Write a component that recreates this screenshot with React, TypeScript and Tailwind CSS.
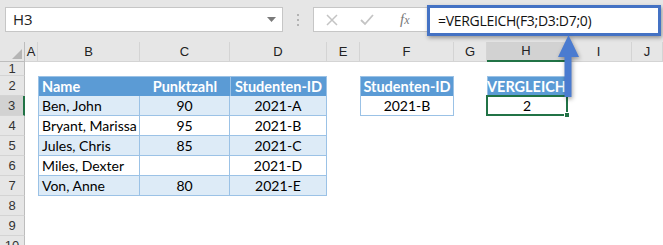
import React from 'react';

const cols = ['A', 'B', 'C', 'D', 'E', 'F', 'G', 'H', 'I', 'J'];

const rows = [
  { name: 'Ben, John', score: '90', id: '2021-A' },
  { name: 'Bryant, Marissa', score: '95', id: '2021-B' },
  { name: 'Jules, Chris', score: '85', id: '2021-C' },
  { name: 'Miles, Dexter', score: '', id: '2021-D' },
  { name: 'Von, Anne', score: '80', id: '2021-E' },
];

const cellFont = { fontFamily: 'Lato, "Liberation Sans", sans-serif' };

function Toolbar() {
  return (
    <div className="relative flex h-[42px] items-start bg-[#e6e6e6] pt-[7px]">
      <div className="ml-[5px] flex h-[25px] w-[278px] items-center justify-between border border-[#c6c6c6] bg-white pl-[7px] pr-[6px]">
        <span className="text-[15px] text-[#222]" style={{ fontFamily: '"Open Sans", sans-serif' }}>H3</span>
        <svg width="9" height="5" viewBox="0 0 9 5"><path d="M0 0h9L4.5 5z" fill="#7a7a7a" /></svg>
      </div>
      <div className="flex h-[25px] w-[30px] flex-col items-center justify-center gap-[3px]">
        <span className="h-[2px] w-[2px] bg-[#b3b3b3]" />
        <span className="h-[2px] w-[2px] bg-[#b3b3b3]" />
        <span className="h-[2px] w-[2px] bg-[#b3b3b3]" />
      </div>
      <div className="flex h-[25px] w-[120px] items-center border border-[#c6c6c6] bg-white pl-[12px]">
        <svg width="12" height="12" viewBox="0 0 12 12" className="mr-[22px]">
          <path d="M1 1l10 10M11 1L1 11" stroke="#c4c4c4" strokeWidth="1.5" />
        </svg>
        <svg width="14" height="12" viewBox="0 0 14 12" className="mr-[26px]">
          <path d="M1 6l4 4 8-9" stroke="#c4c4c4" strokeWidth="1.8" fill="none" />
        </svg>
        <span className="text-[15px] italic text-[#7a7a7a]" style={{ fontFamily: '"Liberation Serif", serif' }}>
          f<span className="text-[12px]">x</span>
        </span>
      </div>
      <div className="absolute left-[427px] top-[5px] flex h-[31px] w-[234px] items-center border-[3px] border-[#4472c4] bg-white pl-[8px] shadow-[1px_2px_4px_rgba(0,0,0,0.35)]">
        <span className="text-[14px] text-[#111]" style={{ fontFamily: '"Open Sans", sans-serif', letterSpacing: '-0.3px' }}>
          =VERGLEICH(F3;D3:D7;0)
        </span>
      </div>
    </div>
  );
}

function ColHeader({ label, active }: { label: string; active?: boolean }) {
  return (
    <div
      className={`flex items-center justify-center border-r border-b border-[#d4d4d4] text-[13px] text-[#222] ${
        active ? 'bg-[#d2d2d2] border-b-2 border-b-[#217346]' : 'bg-[#e6e6e6]'
      }`}
      style={{ fontFamily: '"Liberation Sans", sans-serif' }}
    >
      {label}
    </div>
  );
}

function RowHeader({ n, active }: { n: number; active?: boolean }) {
  return (
    <div
      className={`flex items-center justify-center border-b border-[#d4d4d4] text-[13px] text-[#333] ${
        active ? 'bg-[#d2d2d2] border-r-2 border-r-[#217346]' : 'bg-[#e6e6e6] border-r border-r-[#bdbdbd]'
      }`}
      style={{ fontFamily: '"Liberation Sans", sans-serif' }}
    >
      {n}
    </div>
  );
}

function Sheet() {
  const headCell = 'flex items-center whitespace-nowrap bg-[#5b9bd5] text-[14.5px] font-bold text-white border-t border-[#9bc2e6]';
  return (
    <div className="grid grid-cols-[25px_13px_102px_90px_97px_33px_94px_33px_79px_66px_1fr] grid-rows-[20px_14px_repeat(9,20px)] bg-white">
      {/* column headers */}
      <div className="relative border-r border-b border-[#bdbdbd] bg-[#e6e6e6]">
        <svg width="10" height="10" viewBox="0 0 10 10" className="absolute bottom-[2px] right-[2px]">
          <path d="M10 0v10H0z" fill="#b5b5b5" />
        </svg>
      </div>
      {cols.map((c) => (
        <ColHeader key={c} label={c} active={c === 'H'} />
      ))}

      {/* row 1 */}
      <RowHeader n={1} />
      <div className="col-span-10" />

      {/* row 2 */}
      <RowHeader n={2} />
      <div />
      <div className={`${headCell} border-l pl-[3px]`} style={cellFont}>Name</div>
      <div className={`${headCell} justify-end pr-[13px]`} style={cellFont}>Punktzahl</div>
      <div className={`${headCell} border-l justify-center border-r`} style={cellFont}>Studenten-ID</div>
      <div />
      <div className={`${headCell} border-l border-r justify-center`} style={cellFont}>Studenten-ID</div>
      <div />
      <div className={`${headCell} border-l border-r justify-center`} style={cellFont}>VERGLEICH</div>
      <div />
      <div />

      {/* rows 3-7 */}
      {rows.map((r, i) => {
        const bg = i % 2 === 0 ? 'bg-[#ddebf7]' : 'bg-white';
        const base = `flex items-center whitespace-nowrap text-[14px] text-black border-b border-r border-[#9bc2e6] ${bg}`;
        return (
          <React.Fragment key={r.id}>
            <RowHeader n={i + 3} active={i === 0} />
            <div />
            <div className={`${base} border-l pl-[3px]`} style={cellFont}>{r.name}</div>
            <div className={`${base} justify-center`} style={cellFont}>{r.score}</div>
            <div className={`${base} justify-center`} style={cellFont}>{r.id}</div>
            <div />
            {i === 0 ? (
              <div className="flex items-center justify-center border-x border-b border-[#9bc2e6] text-[14px] text-black" style={cellFont}>
                2021-B
              </div>
            ) : (
              <div />
            )}
            <div />
            {i === 0 ? (
              <div className="relative -ml-[1px] -mt-[1px] -mr-[2px] flex items-center justify-center border-2 border-[#217346] text-[14px] text-black" style={cellFont}>
                2
                <span className="absolute -bottom-[4px] -right-[4px] h-[6px] w-[6px] border border-white bg-[#217346]" />
              </div>
            ) : (
              <div />
            )}
            <div />
            <div />
          </React.Fragment>
        );
      })}

      {[8, 9, 10, 11].map((n) => (
        <React.Fragment key={n}>
          <RowHeader n={n} />
          <div className="col-span-10" />
        </React.Fragment>
      ))}
    </div>
  );
}

export default function App() {
  return (
    <div className="relative h-[245px] w-[663px] overflow-hidden bg-white">
      <Toolbar />
      <Sheet />
      {/* pointer arrow from result cell to formula bar */}
      <svg
        width="26"
        height="66"
        viewBox="0 0 26 66"
        className="absolute left-[556px] top-[34px] drop-shadow-[1px_2px_2px_rgba(0,0,0,0.35)]"
      >
        <path d="M12.5 1L23 23h-7.5v40h-7V23H2z" fill="#4a7bd0" />
      </svg>
    </div>
  );
}
